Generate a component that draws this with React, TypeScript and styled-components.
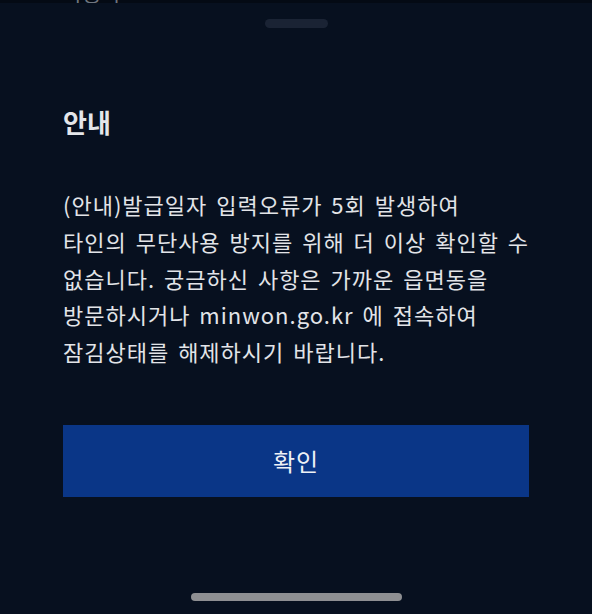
import styled, { createGlobalStyle } from 'styled-components';

const GlobalStyle = createGlobalStyle`
  html, body {
    margin: 0;
    padding: 0;
    background: #07101f;
  }
  body {
    font-family: 'Noto Sans CJK KR', 'Noto Sans', sans-serif;
    -webkit-font-smoothing: antialiased;
  }
`;

const BODY_LINES = [
  '(안내)발급일자 입력오류가 5회 발생하여',
  '타인의 무단사용 방지를 위해 더 이상 확인할 수',
  '없습니다. 궁금하신 사항은 가까운 읍면동을',
  '방문하시거나 minwon.go.kr 에 접속하여',
  '잠김상태를 해제하시기 바랍니다.',
];

const App = () => {
  return (
    <>
      <GlobalStyle />
      <Screen>
        <BehindStrip>
          <BehindText>사용자</BehindText>
        </BehindStrip>
        <Sheet>
          <Handle />
          <Title>안내</Title>
          <Message>
            {BODY_LINES.map((line) => (
              <Line key={line}>{line}</Line>
            ))}
          </Message>
          <ConfirmButton type="button">확인</ConfirmButton>
        </Sheet>
        <HomeIndicator />
      </Screen>
    </>
  );
};

export default App;

const Screen = styled.div`
  width: 592px;
  height: 614px;
  display: flex;
  flex-direction: column;
  align-items: stretch;
  background: #07101f;
  overflow: hidden;
`;

const BehindStrip = styled.div`
  height: 3px;
  overflow: hidden;
  background: #040a14;
  padding-left: 63px;
`;

const BehindText = styled.div`
  margin-top: -18px;
  font-size: 21px;
  line-height: 20px;
  color: #6f7680;
`;

const Sheet = styled.div`
  display: flex;
  flex-direction: column;
  padding: 0 63px;
`;

const Handle = styled.div`
  align-self: center;
  width: 63px;
  height: 9px;
  margin-top: 16px;
  border-radius: 5px;
  background: #1a2334;
`;

const Title = styled.h2`
  margin: 76px 0 0;
  font-size: 26px;
  line-height: 36px;
  font-weight: 600;
  color: #e4e6ea;
`;

const Message = styled.div`
  margin-top: 46px;
  display: flex;
  flex-direction: column;
`;

const Line = styled.p`
  margin: 0;
  font-size: 22px;
  line-height: 36.75px;
  font-weight: 400;
  letter-spacing: 1px;
  word-spacing: 3px;
  color: #e2e4e8;
  white-space: nowrap;
`;

const ConfirmButton = styled.button`
  margin-top: 55px;
  height: 72px;
  width: 100%;
  border: none;
  border-radius: 0;
  background: #0a3687;
  color: #eef1f6;
  font-family: inherit;
  font-size: 24px;
  font-weight: 400;
  letter-spacing: 1px;
  cursor: pointer;
`;

const HomeIndicator = styled.div`
  align-self: center;
  width: 211px;
  height: 8px;
  margin-top: 96px;
  border-radius: 4px;
  background: #8e8f92;
`;
